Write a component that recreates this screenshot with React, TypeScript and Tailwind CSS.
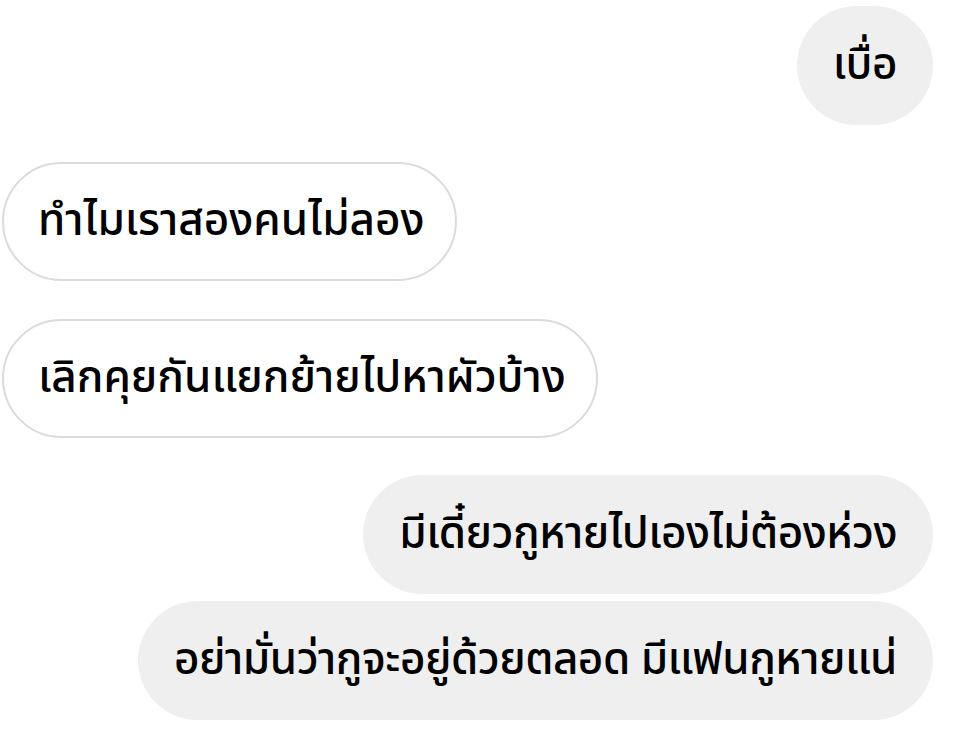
import React from 'react';

type Msg = { text: string; mine: boolean; gap: string };

const messages: Msg[] = [
  { text: `เบื่อ`, mine: true, gap: `mt-[6px]` },
  { text: `ทำไมเราสองคนไม่ลอง`, mine: false, gap: `mt-[37px]` },
  { text: `เลิกคุยกันแยกย้ายไปหาผัวบ้าง`, mine: false, gap: `mt-[38px]` },
  { text: `มีเดี๋ยวกูหายไปเองไม่ต้องห่วง`, mine: true, gap: `mt-[37px]` },
  { text: `อย่ามั่นว่ากูจะอยู่ด้วยตลอด มีแฟนกูหายแน่`, mine: true, gap: `mt-[7px]` },
];

const App = () => {
  return (
    <div
      className="w-[956px] h-[732px] bg-white flex flex-col pl-[2px] pr-[23px] overflow-hidden"
      style={{ fontFamily: `"Noto Sans Thai", "Noto Sans", "Liberation Sans", sans-serif` }}
    >
      {messages.map((m) => (
        <div
          key={m.text}
          className={`${m.gap} flex ${m.mine ? `justify-end` : `justify-start`}`}
        >
          <div
            className={
              m.mine
                ? `h-[119px] flex items-center rounded-full bg-[#efefef] px-9 text-[44px] font-medium tracking-[-0.5px] text-black`
                : `h-[119px] flex items-center rounded-full bg-white border-2 border-[#dbdbdb] pl-[34px] pr-[30px] text-[44px] font-medium text-black`
            }
          >
            {m.text}
          </div>
        </div>
      ))}
    </div>
  );
};

export default App;
